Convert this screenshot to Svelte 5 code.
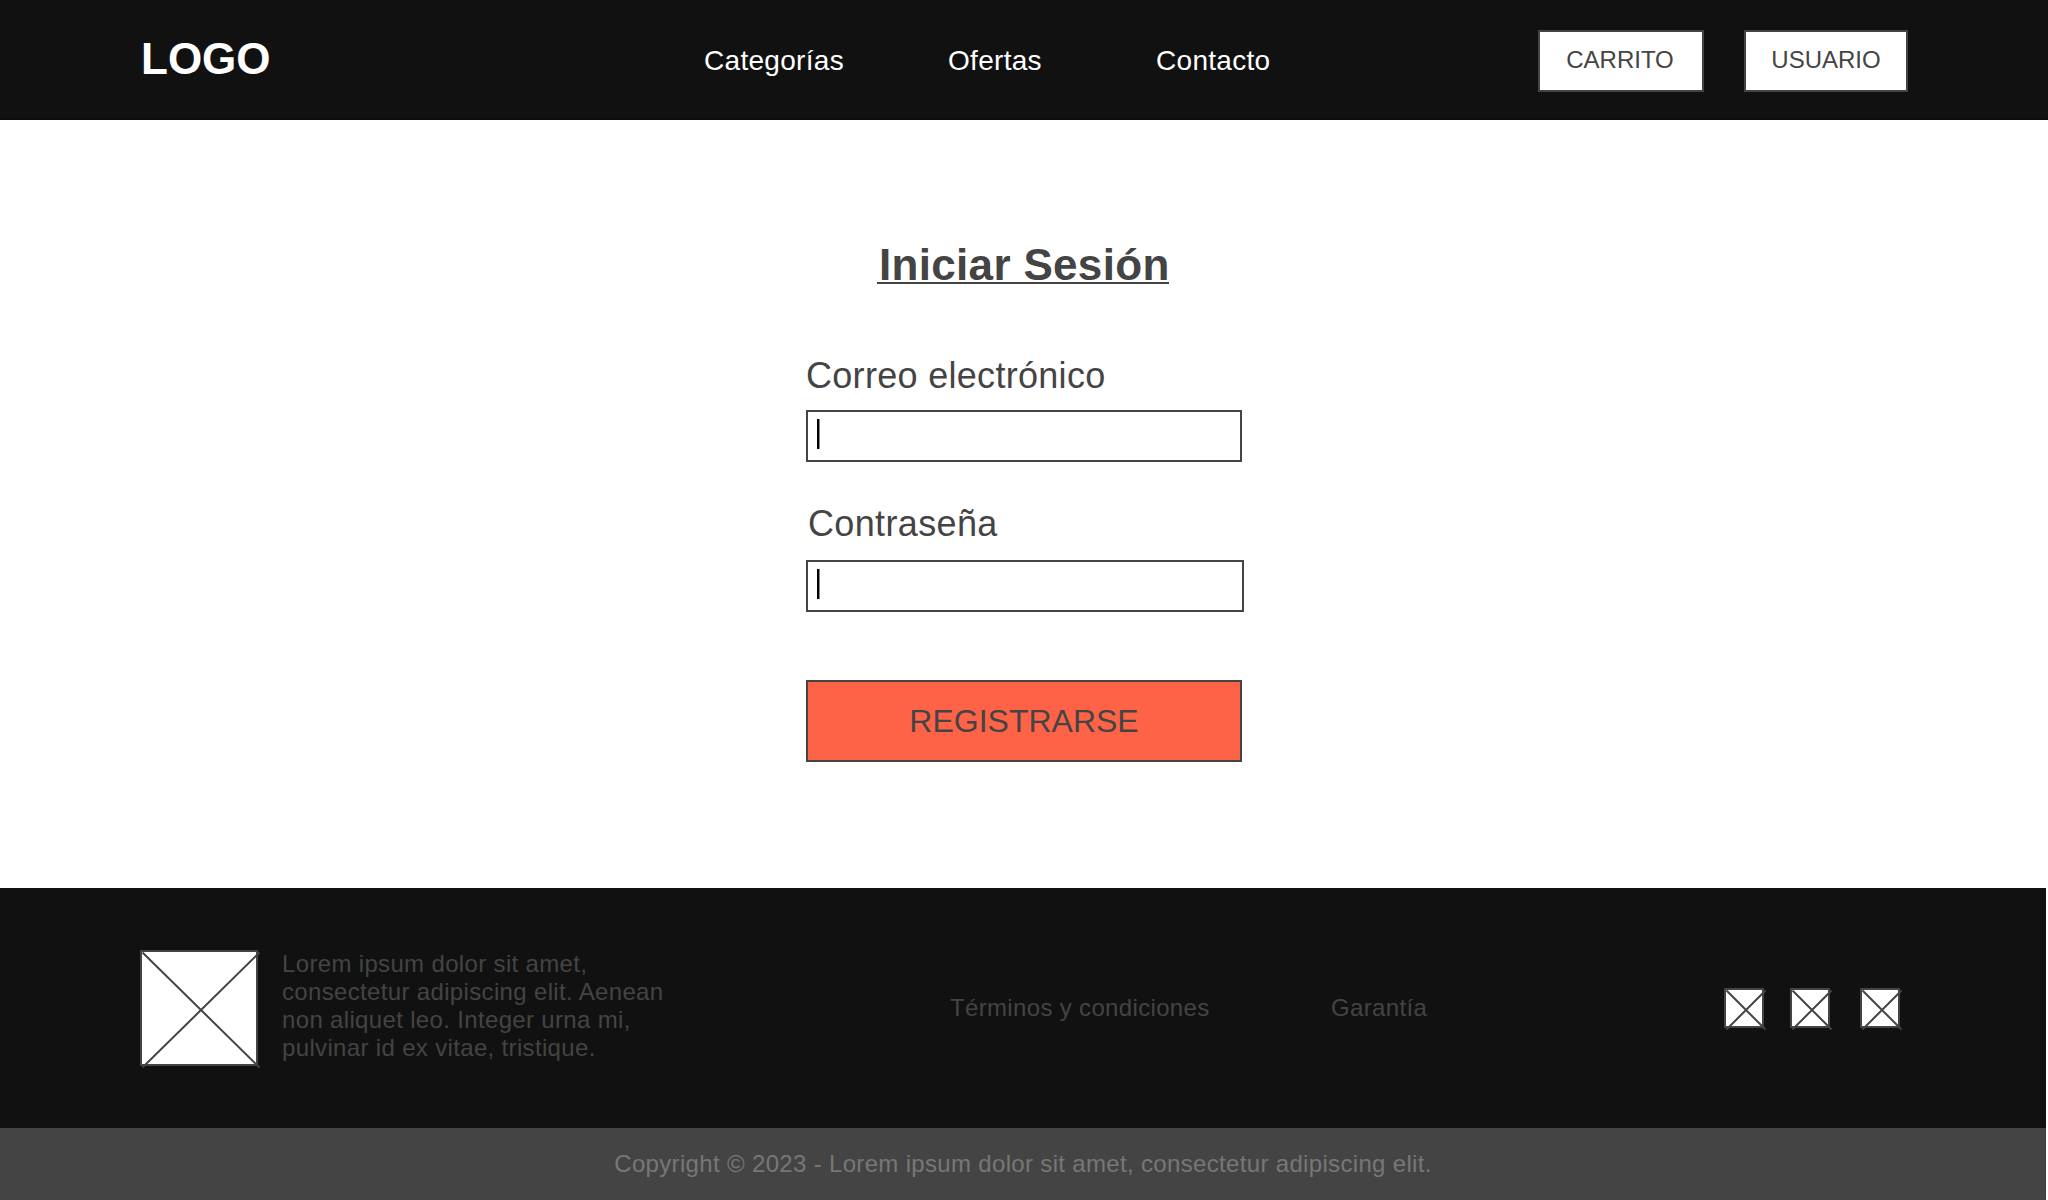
<script>
  const nav = ['Categorías', 'Ofertas', 'Contacto'];
  const social = ['a', 'b', 'c'];
</script>

{#snippet placeholder(w, h)}
  <svg class="placeholder" width={w + 2} height={h + 2} viewBox="0 0 {w + 2} {h + 2}" aria-hidden="true">
    <rect x="1" y="1" width={w - 2} height={h - 2} fill="#fff" stroke="#444" stroke-width="2" />
    <path d="M2.5 2.5L{w + 1.5} {h + 1.5}M{w + 1.5} 2.5L2.5 {h + 1.5}" stroke="#444" stroke-width="2" />
  </svg>
{/snippet}

<div class="page">
  <header>
    <div class="logo">LOGO</div>
    <nav>
      {#each nav as item}
        <a class={item === 'Ofertas' ? 'mid' : ''} href="#top">{item}</a>
      {/each}
    </nav>
    <div class="actions">
      <button class="cart">CARRITO</button>
      <button class="user">USUARIO</button>
    </div>
  </header>

  <main>
    <h1>Iniciar Sesión</h1>
    <form>
      <div class="label">Correo electrónico</div>
      <div class="field"><span class="caret"></span></div>
      <div class="label second">Contraseña</div>
      <div class="field wide"><span class="caret"></span></div>
      <button class="submit" type="button">REGISTRARSE</button>
    </form>
  </main>

  <footer>
    <div class="info">
      {@render placeholder(118, 116)}
      <p>Lorem ipsum dolor sit amet,<br />consectetur adipiscing elit. Aenean<br />non aliquet leo. Integer urna mi,<br />pulvinar id ex vitae, tristique.</p>
      <div class="links">
        <a href="#terms">Términos y condiciones</a>
        <a href="#warranty">Garantía</a>
      </div>
      <div class="social">
        {#each social as s (s)}
          {@render placeholder(40, 40)}
        {/each}
      </div>
    </div>
    <div class="copyright">Copyright © 2023 - Lorem ipsum dolor sit amet, consectetur adipiscing elit.</div>
  </footer>
</div>

<style>
  :global(body) {
    margin: 0;
    background: #fff;
  }
  .page {
    width: 2048px;
    height: 1200px;
    overflow: hidden;
    display: flex;
    flex-direction: column;
    font-family: 'Liberation Sans', Arial, sans-serif;
    color: #444;
  }
  a {
    color: inherit;
    text-decoration: none;
    white-space: nowrap;
  }
  button {
    box-sizing: border-box;
    margin: 0;
    padding: 0;
    border: 2px solid #444;
    border-radius: 0;
    font-family: inherit;
    color: #444;
  }
  header {
    box-sizing: border-box;
    height: 120px;
    display: flex;
    background: #111;
    border-bottom: 2px solid #0c0c0c;
    color: #fff;
  }
  .logo {
    box-sizing: border-box;
    flex: none;
    width: 704px;
    padding: 34px 0 0 141px;
    font-size: 44px;
    line-height: 50px;
    font-weight: 700;
  }
  nav {
    flex: none;
    width: 834px;
    display: flex;
    padding-top: 45px;
    font-size: 28px;
    line-height: 32px;
    letter-spacing: 0.3px;
  }
  nav a {
    width: 244px;
  }
  nav a.mid {
    width: 208px;
  }
  .actions {
    display: flex;
    gap: 40px;
    padding-top: 30px;
  }
  .actions button {
    height: 62px;
    background: #fff;
    font-size: 24px;
    padding-bottom: 2px;
  }
  .actions .cart {
    width: 166px;
    padding-right: 2px;
  }
  .user {
    width: 164px;
  }
  main {
    flex: none;
    height: 768px;
    display: flex;
    flex-direction: column;
    align-items: center;
  }
  h1 {
    box-sizing: border-box;
    width: 292px;
    height: 44px;
    margin: 120px 2px 0 0;
    padding-left: 2px;
    border-bottom: 2px solid #444;
    font-size: 44px;
    line-height: 50px;
    letter-spacing: 0.32px;
    white-space: nowrap;
  }
  form {
    width: 436px;
    display: flex;
    flex-direction: column;
    margin-top: 71px;
  }
  .label {
    font-size: 36px;
    line-height: 42px;
    letter-spacing: 0.3px;
  }
  .label.second {
    margin-top: 41px;
    padding-left: 2px;
    letter-spacing: 0.36px;
  }
  .field {
    box-sizing: border-box;
    width: 436px;
    height: 52px;
    margin-top: 13px;
    border: 2px solid #444;
    padding: 7px 0 0 9px;
  }
  .field.wide {
    width: 438px;
    margin-top: 15px;
  }
  .caret {
    display: block;
    width: 2px;
    height: 30px;
    background: #000;
    box-shadow: 1px 0 0 #888;
  }
  .submit {
    width: 436px;
    height: 82px;
    margin-top: 68px;
    background: #ff6347;
    font-size: 32px;
  }
  footer {
    flex: none;
    height: 312px;
  }
  .info {
    box-sizing: border-box;
    width: 2046px;
    height: 240px;
    display: flex;
    padding: 62px 0 0 140px;
    background: #111;
    font-size: 24px;
    line-height: 28px;
    letter-spacing: 0.34px;
  }
  .placeholder {
    flex: none;
    display: block;
  }
  .info p {
    flex: none;
    width: 668px;
    margin: 0 0 0 22px;
  }
  .links {
    flex: none;
    display: grid;
    grid-template-columns: 381px 1fr;
    width: 774px;
    padding-top: 44px;
  }
  .social {
    display: flex;
    padding-top: 38px;
    gap: 24px;
  }
  .social .placeholder:last-child {
    margin-left: 4px;
  }
  .copyright {
    box-sizing: border-box;
    width: 2046px;
    height: 72px;
    padding-top: 22px;
    border-bottom: 1px solid #4c4347;
    background: #444;
    color: #777;
    font-size: 24px;
    line-height: 28px;
    letter-spacing: 0.33px;
    text-align: center;
  }
</style>
